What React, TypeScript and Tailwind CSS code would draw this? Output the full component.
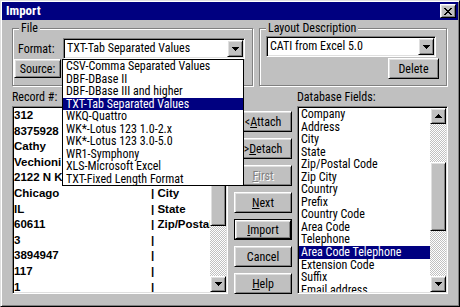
import React from "react";

const UI = "font-['Roboto_Condensed','Liberation_Sans',sans-serif]";
const RAISED =
  "border border-t-white border-l-white border-r-black border-b-black shadow-[inset_1px_1px_0_#dfdfdf,inset_-1px_-1px_0_#808080] bg-[#c0c0c0]";
const SUNKEN =
  "border border-t-[#808080] border-l-[#808080] border-r-white border-b-white shadow-[inset_1px_1px_0_#000,inset_-1px_-1px_0_#dfdfdf]";
const ETCHED = "border border-[#808080] shadow-[inset_1px_1px_0_#fff,1px_1px_0_#fff]";
const DITHER = "bg-[repeating-conic-gradient(#c0c0c0_0_25%,#ffffff_0_50%)] bg-[length:2px_2px]";

function DownTri() {
  return (
    <svg width="7" height="4" viewBox="0 0 7 4" shapeRendering="crispEdges">
      <path d="M0 0h7v1H0zM1 1h5v1H1zM2 2h3v1H2zM3 3h1v1H3z" fill="#000" />
    </svg>
  );
}

function UpTri() {
  return (
    <svg width="7" height="4" viewBox="0 0 7 4" shapeRendering="crispEdges">
      <path d="M3 0h1v1H3zM2 1h3v1H2zM1 2h5v1H1zM0 3h7v1H0z" fill="#000" />
    </svg>
  );
}

function CloseX() {
  return (
    <svg width="8" height="7" viewBox="0 0 8 7" shapeRendering="crispEdges">
      <path
        d="M0 0h2v1H0zM6 0h2v1H6zM1 1h2v1H1zM5 1h2v1H5zM2 2h4v1H2zM3 3h2v1H3zM2 4h4v1H2zM1 5h2v1H1zM5 5h2v1H5zM0 6h2v1H0zM6 6h2v1H6z"
        fill="#000"
      />
    </svg>
  );
}

function ArrowBtn({ up }: { up?: boolean }) {
  return (
    <div className={`${RAISED} w-[16px] h-[16px] shrink-0 flex items-center justify-center`}>
      {up ? <UpTri /> : <DownTri />}
    </div>
  );
}

function Combo({ text, w, children }: { text: string; w: string; children?: React.ReactNode }) {
  return (
    <div className={`relative ${w} h-[21px] ${SUNKEN} bg-white p-[1px] flex`}>
      <div className="flex-1 pl-[2px] leading-[17px] whitespace-nowrap overflow-hidden">{text}</div>
      <div className={`${RAISED} w-[16px] h-[17px] flex items-center justify-center`}>
        <DownTri />
      </div>
      {children}
    </div>
  );
}

function Btn({
  children,
  className = "",
  def,
}: {
  children: React.ReactNode;
  className?: string;
  def?: boolean;
}) {
  if (def) {
    return (
      <div className={`border border-black ${className}`}>
        <div className={`${RAISED} w-full h-full flex items-center justify-center`}>{children}</div>
      </div>
    );
  }
  return <div className={`${RAISED} flex items-center justify-center ${className}`}>{children}</div>;
}

const FORMATS = [
  "CSV-Comma Separated Values",
  "DBF-DBase II",
  "DBF-DBase III and higher",
  "TXT-Tab Separated Values",
  "WKQ-Quattro",
  "WK*-Lotus 123 1.0-2.x",
  "WK*-Lotus 123 3.0-5.0",
  "WR1-Symphony",
  "XLS-Microsoft Excel",
  "TXT-Fixed Length Format",
];

const RECORDS: [string, string][] = [
  ["312", "|"],
  ["8375928", "|"],
  ["Cathy", "|"],
  ["Vechioni", "|"],
  ["2122 N K", "|"],
  ["Chicago", "| City"],
  ["IL", "| State"],
  ["60611", "| Zip/Postal Code"],
  ["3", "|"],
  ["3894947", "|"],
  ["117", "|"],
  ["1", "|"],
];

const FIELDS = [
  "Company",
  "Address",
  "City",
  "State",
  "Zip/Postal Code",
  "Zip City",
  "Country",
  "Prefix",
  "Country Code",
  "Area Code",
  "Telephone",
  "Area Code Telephone",
  "Extension Code",
  "Suffix",
  "Email address",
];

export default function App() {
  return (
    <div
      className={`w-[460px] h-[307px] bg-[#c0c0c0] border border-t-[#dfdfdf] border-l-[#dfdfdf] border-r-black border-b-black shadow-[inset_1px_1px_0_#fff,inset_-1px_-1px_0_#808080] p-[1px] flex flex-col text-[12px] text-black ${UI} overflow-hidden`}
    >
      {/* Title bar */}
      <div className="h-[18px] bg-[#000080] flex items-center pl-[4px] pr-[2px] shrink-0">
        <div className="flex-1 text-white font-bold text-[13px] leading-[18px]">Import</div>
        <div className={`${RAISED} w-[16px] h-[14px] flex items-center justify-center`}>
          <CloseX />
        </div>
      </div>

      <div className="flex-1 px-[10px] flex flex-col">
        {/* Group boxes */}
        <div className="mt-[8px] flex gap-[6px]">
          <div className={`relative w-[241px] h-[58px] ${ETCHED} pt-[9px] flex flex-col`}>
            <div className="absolute left-[6px] top-[-8px] px-[2px] bg-[#c0c0c0] leading-[14px]">File</div>
            <div className="flex items-center h-[21px]">
              <div className="ml-[5px] w-[45px]">Format:</div>
              <Combo text="TXT-Tab Separated Values" w="w-[182px]">
                <div className="absolute z-20 left-[-2px] top-[20px] w-[182px] h-[127px] border border-black bg-white">
                  {FORMATS.map((f, i) => (
                    <div
                      key={f}
                      className={`h-[12.5px] leading-[12.5px] pl-[3px] whitespace-nowrap ${
                        i === 3 ? "bg-[#000080] text-white" : ""
                      }`}
                    >
                      {f}
                    </div>
                  ))}
                </div>
              </Combo>
            </div>
            <Btn className="ml-[1px] w-[47px] h-[19px]">Source:</Btn>
          </div>

          <div className={`relative w-[188px] h-[58px] ${ETCHED} pt-[7px] flex flex-col`}>
            <div className="absolute left-[6px] top-[-8px] px-[2px] bg-[#c0c0c0] leading-[14px]">
              Layout Description
            </div>
            <div className="ml-[6px]">
              <Combo text="CATI from Excel 5.0" w="w-[170px]" />
            </div>
            <Btn className="mt-[1px] self-end mr-[7px] w-[51px] h-[21px]">Delete</Btn>
          </div>
        </div>

        {/* Main row */}
        <div className="mt-[4px] flex">
          <div className="w-[216px] flex flex-col">
            <div className="h-[14px] leading-[14px]">Record #:</div>
            <div className={`mt-[2px] h-[188px] ${SUNKEN} bg-white p-[1px] flex`}>
              <div className="flex-1 overflow-hidden font-['Liberation_Sans',Arial,sans-serif] font-bold text-[11.5px]">
                {RECORDS.map(([a, b]) => (
                  <div key={a} className="h-[15.6px] leading-[15.6px] flex whitespace-nowrap">
                    <div className="w-[137px] shrink-0 overflow-hidden">{a}</div>
                    <div className="whitespace-nowrap">{b}</div>
                  </div>
                ))}
              </div>
              <div className="w-[16px] flex flex-col">
                <ArrowBtn up />
                <div className={`${RAISED} h-[102px]`} />
                <div className={`flex-1 ${DITHER}`} />
                <ArrowBtn />
              </div>
            </div>
          </div>

          <div className="ml-[6px] w-[58px] pt-[21px] flex flex-col gap-[6px]">
            <Btn className="h-[21px]">
              &lt;<u className="underline-offset-1">A</u>ttach
            </Btn>
            <Btn className="h-[21px]">
              &gt;<u className="underline-offset-1">D</u>etach
            </Btn>
            <Btn className="h-[21px]">
              <span className="text-[#808080] [text-shadow:1px_1px_0_#fff]">
                <u className="underline-offset-1">F</u>irst
              </span>
            </Btn>
            <Btn className="h-[21px]">
              <u className="underline-offset-1">N</u>ext
            </Btn>
            <Btn className="h-[21px]" def>
              <u className="underline-offset-1">I</u>mport
            </Btn>
            <Btn className="h-[21px]">Cancel</Btn>
            <Btn className="h-[21px]">
              <u className="underline-offset-1">H</u>elp
            </Btn>
          </div>

          <div className="ml-[5px] w-[151px] flex flex-col">
            <div className="h-[14px] leading-[14px]">Database Fields:</div>
            <div className={`mt-[2px] h-[188px] ${SUNKEN} bg-white p-[1px] flex`}>
              <div className="flex-1 overflow-hidden">
                {FIELDS.map((f, i) => (
                  <div
                    key={f}
                    className={`h-[12.55px] leading-[12.55px] pl-[2px] whitespace-nowrap ${
                      i === 11 ? "bg-[#000080] text-white" : ""
                    }`}
                  >
                    {f}
                  </div>
                ))}
              </div>
              <div className="w-[16px] flex flex-col">
                <ArrowBtn up />
                <div className={`h-[38px] ${DITHER}`} />
                <div className={`${RAISED} h-[69px]`} />
                <div className={`flex-1 ${DITHER}`} />
                <ArrowBtn />
              </div>
            </div>
          </div>
        </div>
      </div>
    </div>
  );
}
